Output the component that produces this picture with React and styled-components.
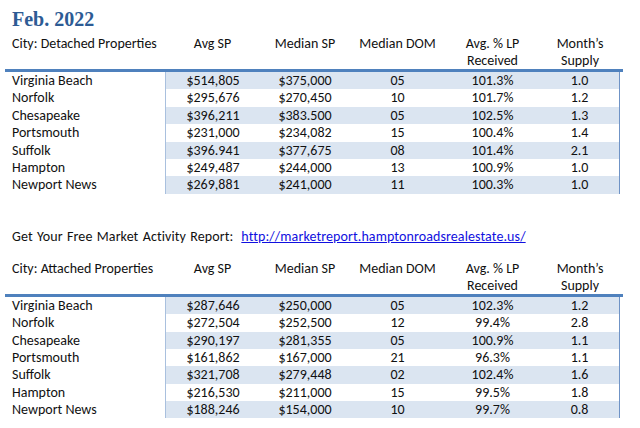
import React from "react";
import styled, { createGlobalStyle } from "styled-components";

const Global = createGlobalStyle`
  html, body { margin: 0; padding: 0; background: #fff; }
  body { font-family: Carlito, Lato, "Liberation Sans", sans-serif; color: #111; }
`;

const COLS = "160px 95px 90px 95px 95px 80px";

const detached = [
  ["Virginia Beach", "$514,805", "$375,000", "05", "101.3%", "1.0"],
  ["Norfolk", "$295,676", "$270,450", "10", "101.7%", "1.2"],
  ["Chesapeake", "$396,211", "$383.500", "05", "102.5%", "1.3"],
  ["Portsmouth", "$231,000", "$234,082", "15", "100.4%", "1.4"],
  ["Suffolk", "$396.941", "$377,675", "08", "101.4%", "2.1"],
  ["Hampton", "$249,487", "$244,000", "13", "100.9%", "1.0"],
  ["Newport News", "$269,881", "$241,000", "11", "100.3%", "1.0"],
];

const attached = [
  ["Virginia Beach", "$287,646", "$250,000", "05", "102.3%", "1.2"],
  ["Norfolk", "$272,504", "$252,500", "12", "99.4%", "2.8"],
  ["Chesapeake", "$290,197", "$281,355", "05", "100.9%", "1.1"],
  ["Portsmouth", "$161,862", "$167,000", "21", "96.3%", "1.1"],
  ["Suffolk", "$321,708", "$279,448", "02", "102.4%", "1.6"],
  ["Hampton", "$216,530", "$211,000", "15", "99.5%", "1.8"],
  ["Newport News", "$188,246", "$154,000", "10", "99.7%", "0.8"],
];

const Page = styled.div`
  width: 640px;
  height: 428px;
  padding-left: 5px;
  box-sizing: border-box;
  display: flex;
  flex-direction: column;
  font-size: 14px;
`;

const Title = styled.h1`
  margin: 7px 0 0 7px;
  height: 28px;
  font: bold 20px/24px "Liberation Serif", serif;
  color: #2d5b94;
`;

const HeadRow = styled.div`
  display: grid;
  grid-template-columns: ${COLS};
  line-height: 17px;
  height: 34px;
  margin-top: ${(p) => p.$top || 0}px;
`;

const HeadCell = styled.div`
  text-align: ${(p) => (p.$city ? "left" : "center")};
  padding-left: ${(p) => (p.$city ? "7px" : "0")};
  white-space: nowrap;
`;

const Body = styled.div`
  border-top: 3px solid #4f81bd;
  width: 618px;
`;

const Row = styled.div`
  display: grid;
  grid-template-columns: ${COLS};
  height: 17.4px;
  line-height: 17.4px;
`;

const Cell = styled.div`
  text-align: center;
  white-space: nowrap;
  background: ${(p) => (p.$shade ? "#dbe5f1" : "#fff")};
  border-left: ${(p) => (p.$first ? "1px solid #a9c0de" : "none")};
  border-right: ${(p) => (p.$last ? "1px solid #6f93c6" : "none")};
`;

const CityCell = styled.div`
  padding-left: 7px;
  white-space: nowrap;
`;

const Promo = styled.div`
  margin: 34px 0 0 7px;
  line-height: 17px;
  word-spacing: 1px;
  letter-spacing: 0.1px;
`;

const Link = styled.a`
  color: #1010e0;
  text-decoration: underline;
  margin-left: 8px;
`;

function Table({ label, rows, top }) {
  return (
    <>
      <HeadRow $top={top}>
        <HeadCell $city>City: {label} Properties</HeadCell>
        <HeadCell>Avg SP</HeadCell>
        <HeadCell>Median SP</HeadCell>
        <HeadCell>Median DOM</HeadCell>
        <HeadCell>
          Avg. % LP
          <br />
          Received
        </HeadCell>
        <HeadCell>
          Month’s
          <br />
          Supply
        </HeadCell>
      </HeadRow>
      <Body>
        {rows.map((r, i) => (
          <Row key={r[0]}>
            <CityCell>{r[0]}</CityCell>
            {r.slice(1).map((v, j) => (
              <Cell key={j} $shade={i % 2 === 0} $first={j === 0} $last={j === 4}>
                {v}
              </Cell>
            ))}
          </Row>
        ))}
      </Body>
    </>
  );
}

export default function App() {
  return (
    <Page>
      <Global />
      <Title>Feb. 2022</Title>
      <Table label="Detached" rows={detached} />
      <Promo>
        Get Your Free Market Activity Report:
        <Link href="#">http://marketreport.hamptonroadsrealestate.us/</Link>
      </Promo>
      <Table label="Attached" rows={attached} top={15} />
    </Page>
  );
}
